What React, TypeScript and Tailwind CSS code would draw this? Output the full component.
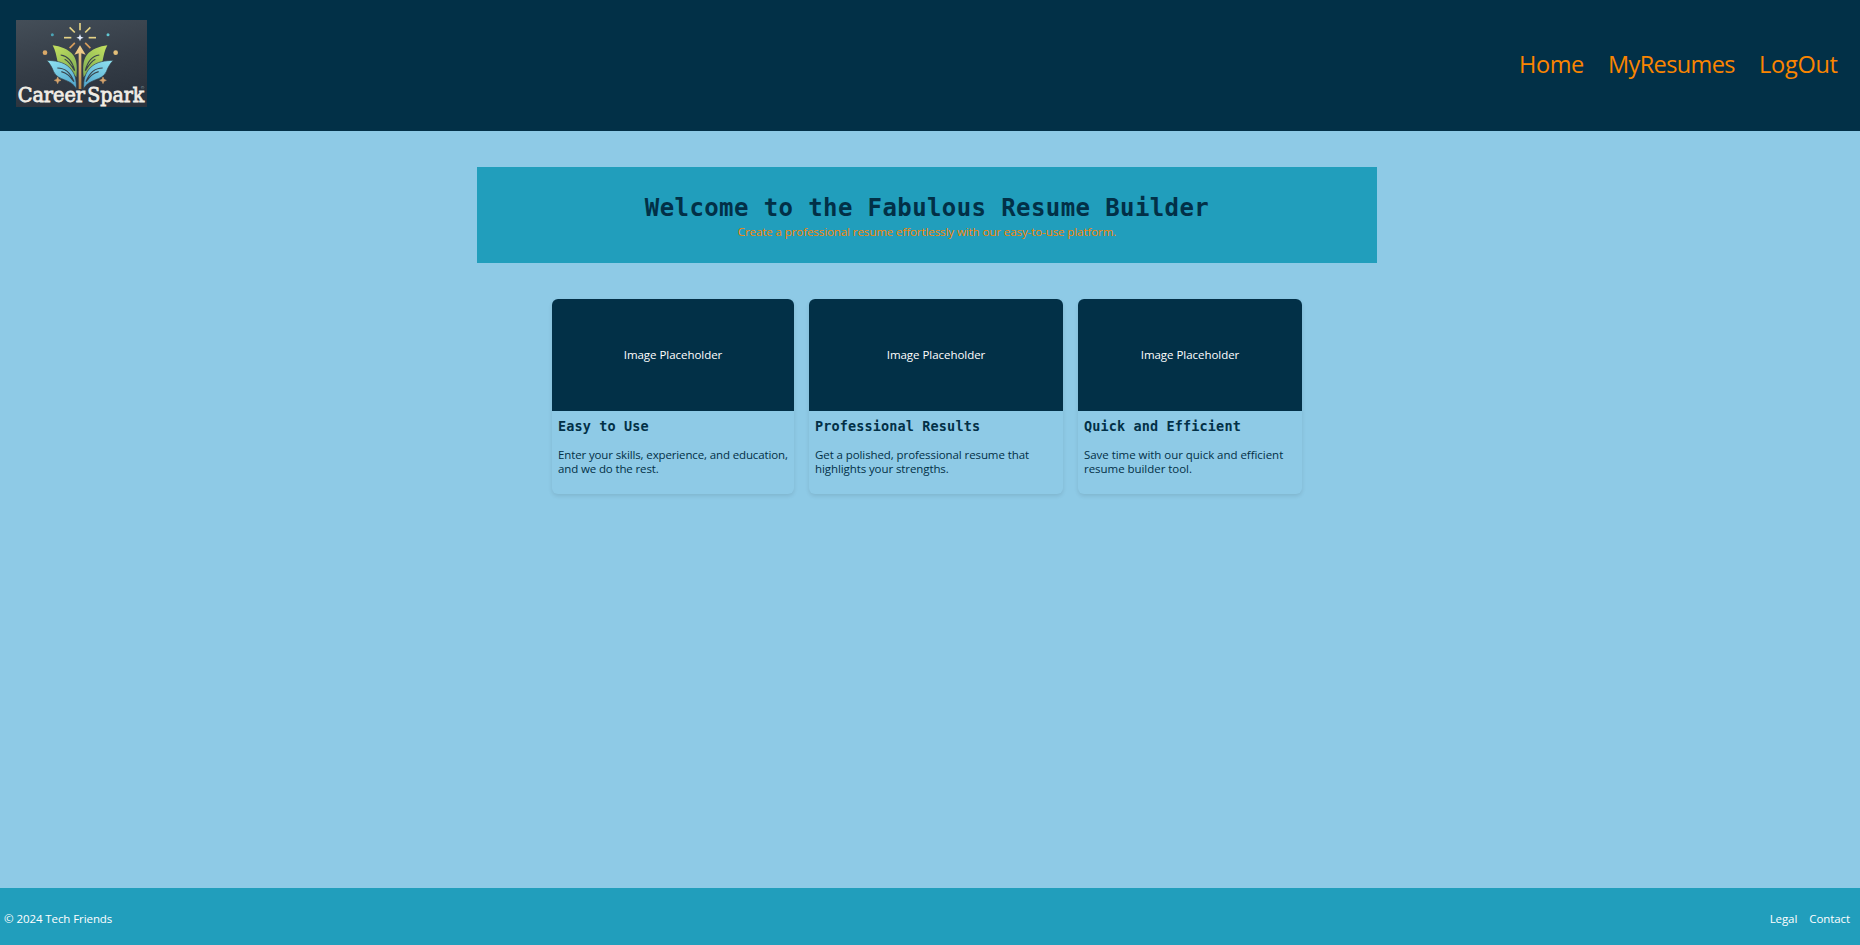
const cards = [
  { title: 'Easy to Use', lines: ['Enter your skills, experience, and education,', 'and we do the rest.'], width: 'w-[242px]', tracking: 'tracking-[-0.13px]' },
  { title: 'Professional Results', lines: ['Get a polished, professional resume that', 'highlights your strengths.'], width: 'w-[254px]', tracking: 'tracking-[-0.09px]' },
  { title: 'Quick and Efficient', lines: ['Save time with our quick and efficient', 'resume builder tool.'], width: 'w-[224px]', tracking: 'tracking-[-0.04px]' },
];

const rays = [0, 45, 90, 135, 225, 270, 315];

function Plant() {
  return (
    <>
      <path d="M158 136C180 139 206 147 220 166C231 181 232 203 229 232C220 213 184 214 173 186C169 168 166 150 158 136Z" fill="url(#green)" />
      <path d="M182 165C203 168 217 183 224 212C214 196 207 184 194 178" fill="none" stroke="#39434b" strokeWidth="3.5" />
      <path d="M140 181C163 182 190 184 209 203C226 221 230 240 229 267C214 235 174 244 161 215C155 200 149 190 140 181Z" fill="url(#blue)" stroke="#343c46" strokeWidth="2" />
      <path d="M172 204C197 204 212 219 222 245C207 226 201 220 184 215" fill="none" stroke="#39434b" strokeWidth="3.5" />
    </>
  );
}

function Logo() {
  return (
    <svg className="h-[87px] w-[131px] shrink-0" viewBox="48 60 393 261" role="img" aria-label="CareerSpark">
      <defs>
        <linearGradient id="plate" x1="0" y1="0" x2="0.3" y2="1">
          <stop offset="0" stopColor="#444e58" />
          <stop offset="0.6" stopColor="#343c46" />
          <stop offset="1" stopColor="#2b333d" />
        </linearGradient>
        <linearGradient id="green" x1="0" y1="0" x2="0.6" y2="1">
          <stop offset="0" stopColor="#c4e05f" />
          <stop offset="1" stopColor="#86b456" />
        </linearGradient>
        <linearGradient id="blue" x1="0" y1="0" x2="0.6" y2="1">
          <stop offset="0" stopColor="#92e4f2" />
          <stop offset="1" stopColor="#56abcf" />
        </linearGradient>
        <linearGradient id="gold" x1="0" y1="0" x2="0" y2="1">
          <stop offset="0" stopColor="#f3d391" />
          <stop offset="1" stopColor="#b98548" />
        </linearGradient>
      </defs>
      <rect x="48" y="60" width="393" height="261" fill="url(#plate)" />
      {rays.map((angle) => (
        <path
          key={angle}
          d="M240 91V69"
          transform={`rotate(${angle} 240 113)${angle % 180 === 90 ? ' translate(0 -4)' : ''}`}
          stroke={angle > 90 && angle < 270 ? '#d79d5c' : '#e5d387'}
          strokeWidth="5"
        />
      ))}
      <path d="M240 102L243 110L251 113L243 116L240 124L237 116L229 113L237 110Z" fill="#e4edff" />
      <Plant />
      <g transform="translate(480 0) scale(-1 1)">
        <Plant />
      </g>
      <path d="M240 136L257 164L244 160V267H236V160L223 164Z" fill="url(#gold)" />
      <circle cx="135" cy="158" r="7" fill="#dba968" />
      <circle cx="347" cy="158" r="7" fill="#e4bf79" />
      <circle cx="157" cy="104" r="4.5" fill="#4ba4b5" />
      <circle cx="324" cy="104" r="4.5" fill="#62c8d3" />
      <path d="M173 231L176 238L183 241L176 244L173 251L170 244L163 241L170 238Z" fill="#d6a46c" stroke="#d6a46c" strokeWidth="1.5" />
      <path d="M309 231L312 238L319 241L312 244L309 251L306 244L299 241L306 238Z" fill="#d6a46c" stroke="#d6a46c" strokeWidth="1.5" />
      <g fill="#f1eee6" stroke="#f1eee6" strokeWidth="2.4" fontFamily="'DejaVu Serif', serif" fontSize="60">
        <text x="53" y="307" textLength="202" lengthAdjust="spacingAndGlyphs">Career</text>
        <text x="262" y="307" textLength="171" lengthAdjust="spacingAndGlyphs">Spark</text>
      </g>
      <text x="423" y="267" fill="#a6c7cc" fontFamily="'Liberation Sans', sans-serif" fontSize="13">©</text>
    </svg>
  );
}

export default function App() {
  return (
    <div className="flex min-h-screen flex-col bg-[#8ecae6] font-['Open_Sans','Noto_Sans',sans-serif] text-[11.5px] leading-[14px] tracking-[-0.08px] text-[#023047]">
      <header className="flex h-[131px] items-start justify-between bg-[#023047] pt-5 pr-[22px] pl-4">
        <Logo />
        <nav className="flex gap-6 pt-7 text-[23.5px] leading-8 text-[#fb8500]">
          <a className="w-[65px] whitespace-nowrap tracking-[-0.4px]">Home</a>
          <a className="w-[127px] whitespace-nowrap tracking-[-0.6px]">MyResumes</a>
          <a className="w-[79px] whitespace-nowrap tracking-[-0.25px]">LogOut</a>
        </nav>
      </header>

      <main className="flex grow flex-col items-center pt-9 pr-1.5">
        <section className="h-24 w-[900px] bg-[#219ebc] pt-[25px] text-center">
          <h1 className="font-['DejaVu_Sans_Mono',monospace] text-[24px] leading-8 font-bold tracking-[0.4px]">
            Welcome to the Fabulous Resume Builder
          </h1>
          <p className="pt-px tracking-[-0.08px] text-[#fb8500]">Create a professional resume effortlessly with our easy-to-use platform.</p>
        </section>

        <section className="mt-9 flex gap-[15px]">
          {cards.map((card) => (
            <article key={card.title} className={`h-[195px] overflow-hidden rounded-md shadow-[0_2px_4px_rgba(0,0,0,0.1)] ${card.width}`}>
              <div className="flex h-28 items-center justify-center bg-[#023047] font-medium tracking-[-0.04px] text-white">Image Placeholder</div>
              <div className="px-1.5 pt-[7px]">
                <h2 className="font-['DejaVu_Sans_Mono',monospace] text-[13.5px] leading-4 font-bold tracking-[0.13px]">{card.title}</h2>
                <p className={`mt-[14px] whitespace-nowrap ${card.tracking}`}>
                  {card.lines[0]}
                  <br />
                  {card.lines[1]}
                </p>
              </div>
            </article>
          ))}
        </section>
      </main>

      <footer className="flex h-[57px] items-center justify-between bg-[#219ebc] pt-1 pr-[10px] pl-1 text-white">
        <span>© 2024 Tech Friends</span>
        <nav className="flex gap-3">
          <a>Legal</a>
          <a>Contact</a>
        </nav>
      </footer>
    </div>
  );
}
